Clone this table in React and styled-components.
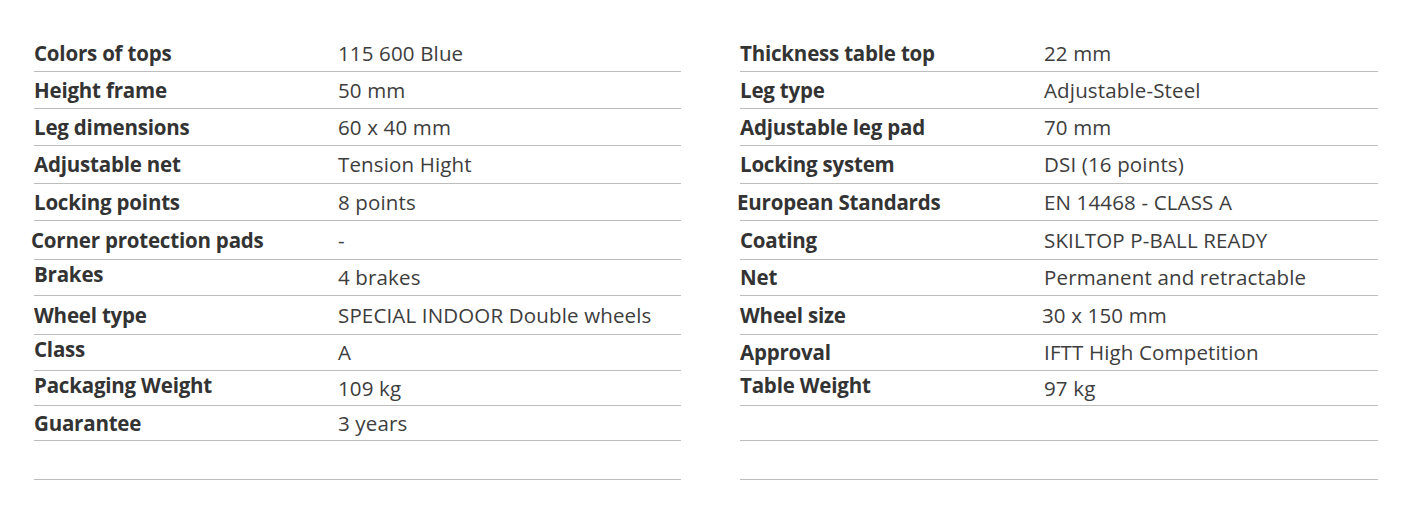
import React from "react";
import styled, { createGlobalStyle } from "styled-components";

const Global = createGlobalStyle`
  html, body { margin: 0; padding: 0; background: #fff; }
  body { font-family: "Open Sans", "Noto Sans CJK KR", sans-serif; color: #333; }
`;

const heights = [37, 37, 37, 38, 37, 39, 36, 39, 36, 35, 35, 39];

// [label, value, labelShiftX, labelShiftY, valueShiftX]
const left = [
  ["Colors of tops", "115 600 Blue"],
  ["Height frame", "50 mm"],
  ["Leg dimensions", "60 x 40 mm"],
  ["Adjustable net", "Tension Hight"],
  ["Locking points", "8 points"],
  ["Corner protection pads", "-", -3],
  ["Brakes", "4 brakes", 0, -3],
  ["Wheel type", "SPECIAL INDOOR Double wheels"],
  ["Class", "A", 0, -3],
  ["Packaging Weight", "109 kg", 0, -3],
  ["Guarantee", "3 years"],
  ["", ""],
];

const right = [
  ["Thickness table top", "22 mm"],
  ["Leg type", "Adjustable-Steel"],
  ["Adjustable leg pad", "70 mm"],
  ["Locking system", "DSI (16 points)"],
  ["European Standards", "EN 14468 - CLASS A", -3],
  ["Coating", "SKILTOP P-BALL READY"],
  ["Net", "Permanent and retractable"],
  ["Wheel size", "30 x 150 mm", 0, 0, -2],
  ["Approval", "IFTT High Competition"],
  ["Table Weight", "97 kg", 0, -3],
  ["", ""],
  ["", ""],
];

const Page = styled.div`
  display: grid;
  grid-template-columns: 647px 638px;
  column-gap: 59px;
  padding: 35px 0 0 34px;
`;

const Panel = styled.div`
  display: flex;
  flex-direction: column;
`;

const Row = styled.div`
  display: grid;
  grid-template-columns: 304px 1fr;
  align-items: center;
  height: ${(p) => p.$h}px;
  box-sizing: border-box;
  border-bottom: 1px solid #bdbdbd;
  font-size: 20.5px;
  line-height: 1;
`;

const Label = styled.div`
  font-weight: 700;
  color: #333;
  letter-spacing: -0.2px;
  transform: translate(${(p) => p.$dx || 0}px, ${(p) => p.$dy || 0}px);
`;

const Value = styled.div`
  font-weight: 400;
  color: #3d3d3d;
  letter-spacing: 0.15px;
  transform: translateX(${(p) => p.$dx || 0}px);
`;

function SpecPanel({ rows }) {
  return (
    <Panel>
      {rows.map(([l, v, lx, ly, vx], i) => (
        <Row key={i} $h={heights[i]}>
          <Label $dx={lx} $dy={ly}>{l}</Label>
          <Value $dx={vx}>{v}</Value>
        </Row>
      ))}
    </Panel>
  );
}

export default function App() {
  return (
    <>
      <Global />
      <Page>
        <SpecPanel rows={left} />
        <SpecPanel rows={right} />
      </Page>
    </>
  );
}
